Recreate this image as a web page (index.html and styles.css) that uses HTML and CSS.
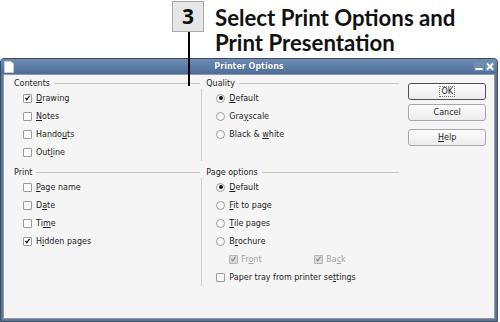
FILE: index.html
```html
<!DOCTYPE html>
<html>
<head>
<meta charset="utf-8">
<link rel="stylesheet" href="styles.css">
</head>
<body>
<div class="page">
  <div class="callout">
    <div class="step">3</div>
    <div class="heading">Select Print Options and<br>Print Presentation</div>
  </div>
  <div class="leader"></div>
  <div class="window">
    <div class="titlebar">
      <svg class="appicon" width="10" height="12" viewBox="0 0 10 12"><path d="M0.5 0.5 H7 L9.5 3 V11.5 H0.5 Z" fill="#fff" stroke="#c8ccd2"/></svg>
      <div class="title">Printer Options</div>
      <div class="wbtns">
        <svg width="10" height="9" viewBox="0 0 10 9"><rect x="0" y="0" width="10" height="9" fill="#6f8db3"/><rect x="1.5" y="6" width="7" height="2" fill="#fff"/></svg>
        <svg width="10" height="9" viewBox="0 0 10 9"><rect x="0" y="0" width="10" height="9" fill="#6f8db3"/><path d="M2 1.5 L8 7.5 M8 1.5 L2 7.5" stroke="#fff" stroke-width="1.8"/></svg>
      </div>
    </div>
    <div class="body">
      <div class="col left">
        <div class="group">
          <div class="gtitle">Contents</div>
          <div class="opts">
            <div class="row"><span class="cb on"><svg viewBox="0 0 9 9"><path d="M1.8 4.3 L3.6 6.6 L7.2 1.6"/></svg></span><span><u>D</u>rawing</span></div>
            <div class="row"><span class="cb"></span><span><u>N</u>otes</span></div>
            <div class="row"><span class="cb"></span><span>Hando<u>u</u>ts</span></div>
            <div class="row"><span class="cb"></span><span>Out<u>l</u>ine</span></div>
          </div>
        </div>
        <div class="group second">
          <div class="gtitle">Print</div>
          <div class="opts">
            <div class="row"><span class="cb"></span><span><u>P</u>age name</span></div>
            <div class="row"><span class="cb"></span><span>D<u>a</u>te</span></div>
            <div class="row"><span class="cb"></span><span>Ti<u>m</u>e</span></div>
            <div class="row"><span class="cb on"><svg viewBox="0 0 9 9"><path d="M1.8 4.3 L3.6 6.6 L7.2 1.6"/></svg></span><span>H<u>i</u>dden pages</span></div>
          </div>
        </div>
      </div>
      <div class="col right">
        <div class="group">
          <div class="gtitle">Quality</div>
          <div class="opts ruled four">
            <div class="row"><span class="rb on"></span><span><u>D</u>efault</span></div>
            <div class="row"><span class="rb"></span><span>Gra<u>y</u>scale</span></div>
            <div class="row"><span class="rb"></span><span>Black &amp; <u>w</u>hite</span></div>
          </div>
        </div>
        <div class="group second">
          <div class="gtitle">Page options</div>
          <div class="opts ruled">
            <div class="row"><span class="rb on"></span><span><u>D</u>efault</span></div>
            <div class="row"><span class="rb"></span><span><u>F</u>it to page</span></div>
            <div class="row"><span class="rb"></span><span><u>T</u>ile pages</span></div>
            <div class="row"><span class="rb"></span><span>B<u>r</u>ochure</span></div>
            <div class="row sub">
              <div class="subitem"><span class="cb on dis"><svg viewBox="0 0 9 9"><path d="M1.8 4.3 L3.6 6.6 L7.2 1.6"/></svg></span><span>Fr<u>o</u>nt</span></div>
              <div class="subitem"><span class="cb on dis"><svg viewBox="0 0 9 9"><path d="M1.8 4.3 L3.6 6.6 L7.2 1.6"/></svg></span><span>Ba<u>c</u>k</span></div>
            </div>
            <div class="row"><span class="cb"></span><span>Paper tray from printer se<u>t</u>tings</span></div>
          </div>
        </div>
      </div>
      <div class="col buttons">
        <div class="btn default"><span class="focus">OK</span></div>
        <div class="btn">Cancel</div>
        <div class="btn help"><span><u>H</u>elp</span></div>
      </div>
    </div>
  </div>
</div>
</body>
</html>
```

FILE: styles.css
```css
* { box-sizing: border-box; }
html, body { margin: 0; padding: 0; background: #fff; }
body { width: 500px; height: 322px; overflow: hidden; font-family: "DejaVu Sans", sans-serif; }

.page { position: relative; width: 500px; height: 322px; }

.callout { height: 58px; display: flex; align-items: flex-start; }
.step {
  margin: 1px 0 0 172px;
  width: 32px; height: 31px;
  background: #e6e6e6;
  border: 1px solid #a9a9a9;
  font-family: "Open Sans", "DejaVu Sans", sans-serif;
  font-weight: 700; font-size: 21px; line-height: 28px;
  text-align: center; color: #111;
}
.heading {
  margin: 5px 0 0 11px;
  font-family: "Lato", "Open Sans", sans-serif;
  font-weight: 700; font-size: 22.2px; line-height: 25px;
  color: #111;
}
.leader {
  position: absolute; left: 188px; top: 32px;
  width: 2px; height: 54px; background: #000; z-index: 5;
}

.window {
  width: 498px; height: 264px;
  border: 1px solid #3e4c60;
  border-radius: 4px 4px 0 0;
  background: #5e7593;
  display: flex; flex-direction: column;
}
.titlebar {
  height: 15px; display: flex; align-items: center;
  padding: 0 2px 0 3px;
  background: linear-gradient(#6f8db4, #4d6d98);
  border-radius: 3px 3px 0 0;
}
.appicon { display: block; }
.title {
  flex: 1; text-align: center; color: #fff;
  font-weight: 700; font-size: 8px; padding-left: 10px;
  text-shadow: 0 0 1px #2b3f5c;
}
.wbtns { display: flex; gap: 1px; }
.wbtns svg { display: block; }

.body {
  flex: 1; display: flex;
  background: #f5f5f5;
  margin: 0 2px 2px 2px;
  border: 1px solid #8e9bab;
  padding: 3px 8px 0 10px;
  font-size: 8px; color: #1e1e1e;
}
.col.left { width: 187px; }
.col.right { width: 198px; margin-left: 1px; }
.col.buttons { width: 78px; margin-left: 9px; padding-top: 5px; display: flex; flex-direction: column; }

.group.second { margin-top: 6px; }
.gtitle { height: 11px; display: flex; align-items: center; gap: 4px; color: #222; }
.gtitle::after { content: ""; flex: 1; border-top: 1px solid #c6c6c6; }
.right .gtitle { padding-left: 5px; }

.opts.ruled { border-left: 1px solid #cfcfcf; margin-top: 0; padding-left: 14px; }
.opts.four { min-height: 72px; }
.left .opts { padding-left: 9px; }

.row { height: 18px; display: flex; align-items: center; gap: 4px; white-space: nowrap; }
u { text-decoration: underline; text-underline-offset: 1px; }

.cb {
  width: 9px; height: 9px; flex: none;
  border: 1px solid #9c9c9c; background: #fbfbfb; border-radius: 1px;
  display: flex; align-items: center; justify-content: center;
}
.cb svg { width: 8px; height: 8px; display: block; fill: none; stroke: #111; stroke-width: 1.6; }
.cb.dis { background: #dcdcdc; border-color: #b4b4b4; }
.cb.dis svg { stroke: #8c8c8c; }

.rb {
  width: 9px; height: 9px; flex: none; border-radius: 50%;
  border: 1px solid #9a9a9a; background: #fcfcfc;
  display: flex; align-items: center; justify-content: center;
}
.rb.on::after { content: ""; width: 4px; height: 4px; border-radius: 50%; background: #111; }

.row.sub { padding-left: 13px; color: #a3a3a3; gap: 0; }
.subitem { display: flex; align-items: center; gap: 3px; width: 89px; }

.btn {
  height: 17px; display: flex; align-items: center; justify-content: center;
  border: 1px solid #a8a8a8; border-radius: 3px;
  background: linear-gradient(#fdfdfd, #ececec);
  color: #1e1e1e; margin-bottom: 4px;
}
.btn.default { border-color: #505050; }
.btn.help { margin-top: 4px; }
.focus { border: 1px dotted #777; padding: 0 1px; line-height: 9px; }
```
